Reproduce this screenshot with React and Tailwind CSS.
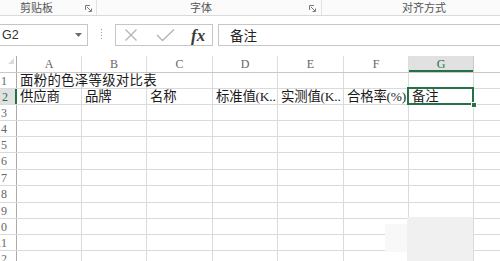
import clsx from 'clsx';

const COLS = [
  { id: 'A', w: 'w-[65px]' },
  { id: 'B', w: 'w-[65px]' },
  { id: 'C', w: 'w-[66px]' },
  { id: 'D', w: 'w-[65px]' },
  { id: 'E', w: 'w-[66px]' },
  { id: 'F', w: 'w-[65px]' },
  { id: 'G', w: 'w-[65px]' },
];

// row heights as measured, a few rows are a pixel taller
const ROW_H = [
  'h-[16px]', 'h-[16px]', 'h-[16px]', 'h-[16px]', 'h-[16px]', 'h-[17px]',
  'h-[16px]', 'h-[17px]', 'h-[16px]', 'h-[16px]', 'h-[16px]', 'h-[16px]',
];

const DATA = {
  1: { A: '面粉的色泽等级对比表' },
  2: {
    A: '供应商',
    B: '品牌',
    C: '名称',
    D: '标准值(K..',
    E: '实测值(K..',
    F: '合格率(%)',
    G: '备注',
  },
};

const serif = "font-['Liberation_Serif','Noto_Sans_CJK_SC',serif]";
const cellFont = "font-['Liberation_Serif','Noto_Sans_CJK_SC',sans-serif]";

function Launcher() {
  return (
    <svg width="7" height="7" viewBox="0 0 7 7" className="text-[#7a7a7a]">
      <path d="M0.5 5V0.5H5" fill="none" stroke="currentColor" />
      <path d="M2 2L6 6M3.5 6.5H6.5V3.5" fill="none" stroke="currentColor" />
    </svg>
  );
}

function Ribbon() {
  return (
    <div className="flex h-[16px] border-b border-[#dadada] bg-[#fbfbfb] text-[11px] leading-[14px] text-[#555] font-['Noto_Sans_CJK_SC',sans-serif]">
      <div className="relative flex w-[97px] shrink-0 border-r border-[#e2e2e2] pl-[20px]">
        <span>剪贴板</span>
        <span className="absolute right-[4px] top-[5px]"><Launcher /></span>
      </div>
      <div className="relative flex w-[225px] shrink-0 border-r border-[#e2e2e2] pl-[93px]">
        <span>字体</span>
        <span className="absolute right-[5px] top-[5px]"><Launcher /></span>
      </div>
      <div className="flex flex-1 pl-[80px]">
        <span>对齐方式</span>
      </div>
    </div>
  );
}

function FormulaBar() {
  return (
    <div className="mt-[8px] flex h-[22px] items-stretch">
      <div className="flex w-[88px] shrink-0 items-center justify-between border-y border-r border-[#c6c6c6] pl-[2px] pr-[5px] font-['Liberation_Sans',sans-serif] text-[12.5px] text-[#333]">
        <span>G2</span>
        <svg width="7" height="4" viewBox="0 0 7 4">
          <path d="M0 0H7L3.5 4Z" fill="#6d6d6d" />
        </svg>
      </div>
      <div className="flex w-[27px] shrink-0 items-center justify-center">
        <svg width="3" height="12" viewBox="0 0 3 12">
          <rect x="1" y="0" width="1" height="1" fill="#9a9a9a" />
          <rect x="1" y="3" width="1" height="1" fill="#9a9a9a" />
          <rect x="1" y="6" width="1" height="1" fill="#9a9a9a" />
          <rect x="1" y="9" width="1" height="1" fill="#9a9a9a" />
        </svg>
      </div>
      <div className="flex w-[98px] shrink-0 items-center border border-[#c6c6c6] pl-[8px]">
        <svg width="14" height="14" viewBox="0 0 14 14">
          <path d="M1.5 1.5L12.5 12.5M12.5 1.5L1.5 12.5" stroke="#b4b4b4" strokeWidth="1.3" />
        </svg>
        <svg width="19" height="14" viewBox="0 0 19 14" className="ml-[18px]">
          <path d="M1 7L6.5 12.5L18 1.5" fill="none" stroke="#b4b4b4" strokeWidth="1.4" />
        </svg>
        <span className="ml-[16px] font-['Liberation_Serif',serif] text-[17px] font-bold italic leading-none text-[#3a3a3a]">
          fx
        </span>
      </div>
      <div className="ml-[5px] flex flex-1 items-center border-y border-l border-[#c6c6c6] pl-[11px] font-['Noto_Sans_CJK_SC',sans-serif] text-[13.5px] text-[#222]">
        备注
      </div>
    </div>
  );
}

function HeaderRow() {
  return (
    <div className={clsx('flex h-[17px] border-b border-[#c9c9c9] text-[12px] text-[#666]', serif)}>
      <div className="relative w-[17px] shrink-0 border-r border-[#ababab]">
        <svg width="6" height="6" viewBox="0 0 6 6" className="absolute right-[2px] top-[2px]">
          <path d="M6 0V6H0Z" fill="#dcdcdc" />
        </svg>
      </div>
      {COLS.map((c) => {
        const active = c.id === 'G';
        return (
          <div
            key={c.id}
            className={clsx(
              'flex shrink-0 items-center justify-center border-r leading-none',
              c.w,
              active
                ? 'border-[#c9c9c9] bg-[#e1e1e1] text-[#217346] shadow-[inset_0_-2px_0_#217346]'
                : 'border-[#dedede]'
            )}
          >
            {c.id}
          </div>
        );
      })}
      <div className="flex-1" />
    </div>
  );
}

function Row({ n, h }) {
  const cells = DATA[n] || {};
  const activeRow = n === 2;
  return (
    <div className={clsx('flex border-b border-[#dadada]', h)}>
      <div
        className={clsx(
          'flex w-[17px] shrink-0 items-center justify-end whitespace-nowrap pr-[9px] text-[12px] leading-none',
          serif,
          activeRow
            ? 'bg-[#e1e1e1] text-[#217346] shadow-[inset_-2px_0_0_#217346]'
            : 'border-r border-[#ababab] text-[#666]'
        )}
      >
        <span>{n}</span>
      </div>
      {COLS.map((c) => {
        const text = cells[c.id];
        const spill = n === 1 && c.id === 'A';
        const active = activeRow && c.id === 'G';
        return (
          <div
            key={c.id}
            className={clsx(
              'relative flex shrink-0 items-center whitespace-nowrap border-r border-[#dadada] pl-[3px] text-[13.4px] leading-[15px] text-[#1a1a1a]',
              cellFont,
              c.w,
              spill ? 'z-10 overflow-visible tracking-[0.3px]' : 'overflow-hidden tracking-[-0.2px]',
              active && 'z-20 overflow-visible'
            )}
          >
            {text}
            {active && (
              <>
                <span className="absolute left-[-2px] top-[-2px] right-[-1px] bottom-[-1px] border-2 border-[#217346]" />
                <span className="absolute right-[-4px] bottom-[-4px] h-[6px] w-[6px] border border-white bg-[#217346]" />
              </>
            )}
          </div>
        );
      })}
      <div className="flex-1" />
    </div>
  );
}

export default function App() {
  return (
    <div className="relative h-[261px] w-[500px] overflow-hidden bg-white">
      <Ribbon />
      <FormulaBar />
      <div className="mt-[10px]">
        <HeaderRow />
        {ROW_H.map((h, i) => (
          <Row key={i} n={i + 1} h={h} />
        ))}
      </div>
      {/* blurred patch over the lower right of the sheet */}
      <div className="absolute left-[385px] top-[224px] h-[28px] w-[22px] bg-[#f8f8f8]" />
      <div className="absolute left-[407px] top-[217px] h-[44px] w-[66px] bg-[#f0f0f0]" />
    </div>
  );
}
